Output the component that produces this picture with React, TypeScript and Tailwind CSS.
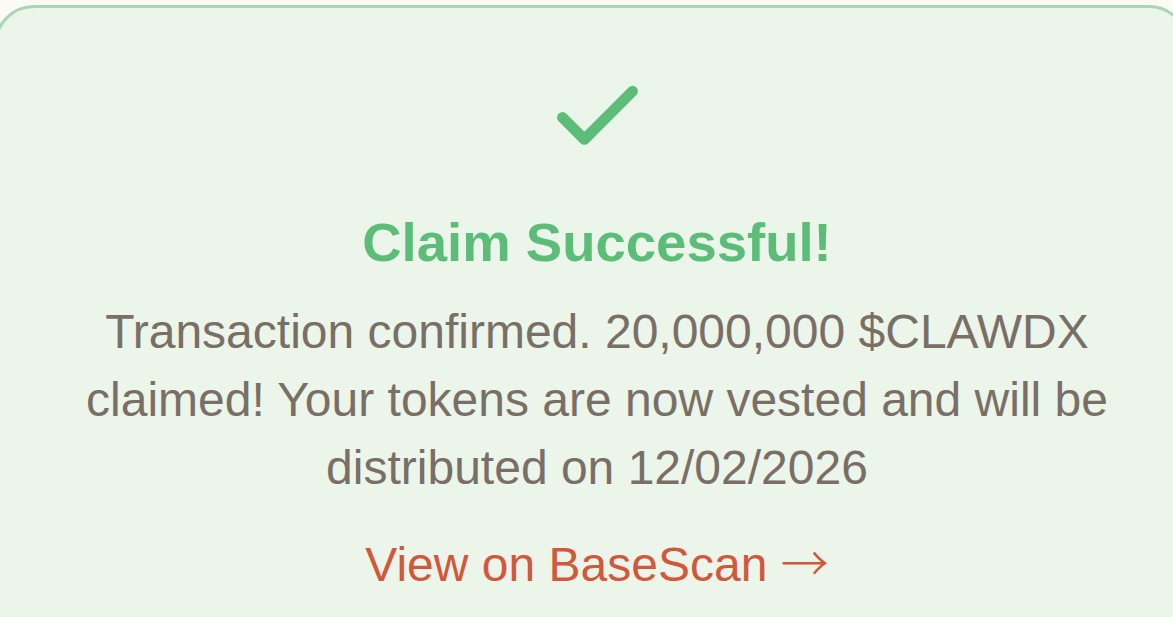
export default function App() {
  return (
    <div className="h-[617px] w-full overflow-hidden bg-[#fbfaf4] pt-[5px] font-['Liberation_Sans',Arial,sans-serif]">
      <div className="-ml-[6px] w-[1195px] rounded-[40px] border-[3px] border-[#a8d5b4] bg-[#ebf5e9] pl-[64px] pr-[53px] pt-[57px] pb-[60px]">
        <div className="flex flex-col items-center text-center">
          <svg
            width="105"
            height="105"
            viewBox="0 0 24 24"
            fill="none"
            stroke="#5cbd79"
            strokeWidth="2.5"
            strokeLinecap="round"
            strokeLinejoin="round"
          >
            <path d="M20 6 9 17l-5-5" />
          </svg>
          <h2 className="mt-[40px] text-[54.5px] leading-[65px] font-bold text-[#5cbd79]">
            Claim Successful!
          </h2>
          <p className="mt-[23px] text-[48px] leading-[68px] text-[#7a6f66]">
            Transaction confirmed. 20,000,000 $CLAWDX claimed! Your tokens are now vested and will be distributed on 12/02/2026
          </p>
          <a href="#" className="mt-[29px] text-[48px] leading-[68px] text-[#d2583b]">
            View on BaseScan{' '}
            <span className="font-['Noto_Sans_CJK_JP',sans-serif] font-light leading-none">→</span>
          </a>
        </div>
      </div>
    </div>
  )
}
